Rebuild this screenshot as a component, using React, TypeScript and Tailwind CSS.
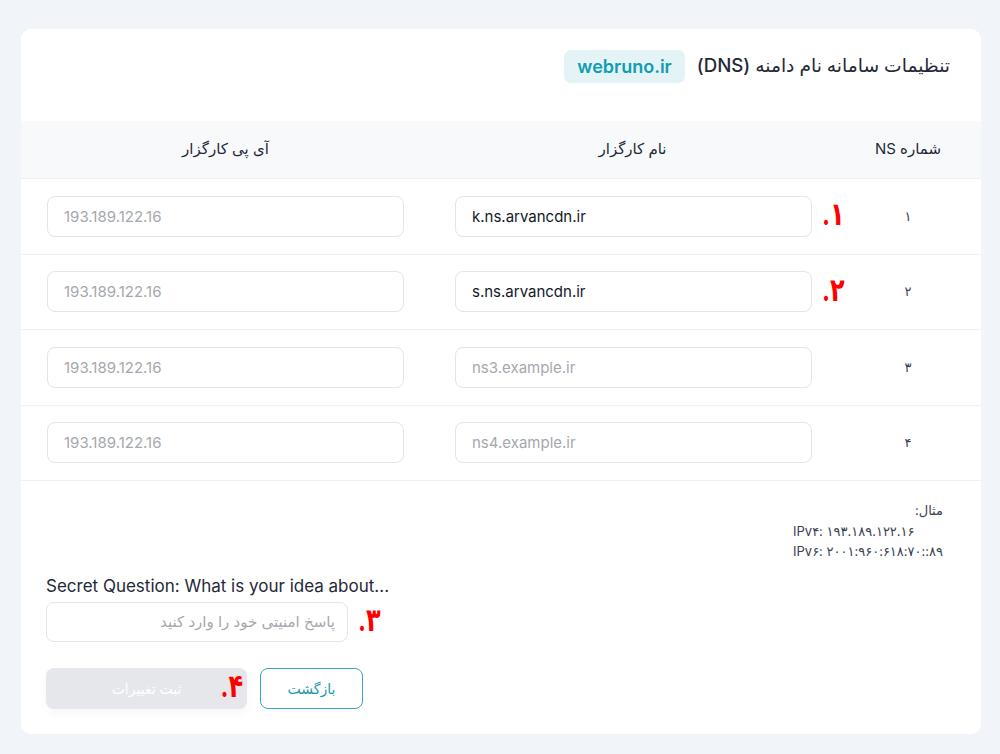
import React from 'react';

const font = { fontFamily: 'Inter, "DejaVu Sans", sans-serif' };

const rows = [
  { num: '۱', ns: 'k.ns.arvancdn.ir', filled: true, mark: '۱.' },
  { num: '۲', ns: 's.ns.arvancdn.ir', filled: true, mark: '۲.' },
  { num: '۳', ns: 'ns3.example.ir', filled: false, mark: '' },
  { num: '۴', ns: 'ns4.example.ir', filled: false, mark: '' },
];

const Marker: React.FC<{ text: string; className?: string }> = ({ text, className }) => (
  <span
    dir="rtl"
    className={`absolute top-1/2 -translate-y-[55%] scale-x-[0.75] text-[32px] font-bold leading-none text-[#ff0000] ${className ?? ''}`}
  >
    {text}
  </span>
);

const App: React.FC = () => {
  return (
    <div className="min-h-[754px] bg-[#f1f4f9] pt-[29px] pb-[20px] pl-[21px] pr-[19px]" style={font}>
      <div dir="rtl" className="w-[960px] rounded-[10px] bg-white pb-[25px]">
        {/* Header */}
        <div className="flex items-center gap-[12px] pr-[31px] pt-[21px] pb-[38px]">
          <h1 className="text-[18.7px] font-medium text-[#1f2937]">تنظیمات سامانه نام دامنه (DNS)</h1>
          <span dir="ltr" className="flex h-[33px] items-center rounded-[7px] bg-[#e4f3f6] px-[13px] text-[18px] font-semibold text-[#0f9db0]">
            webruno.ir
          </span>
        </div>

        {/* Table */}
        <div className="grid grid-cols-[146px_405px_1fr] h-[58px] items-center bg-[#f8f9fb] border-b border-[#eef0f3] text-[15px] text-[#1f2937]">
          <div className="text-center">شماره NS</div>
          <div className="text-center">نام کارگزار</div>
          <div className="text-center">آی پی کارگزار</div>
        </div>

        {rows.map((row) => (
          <div key={row.num} className="grid grid-cols-[146px_405px_1fr] h-[75.5px] items-center border-b border-[#eef0f3]">
            <div className="text-center text-[13px] text-[#374151]">{row.num}</div>
            <div className="pr-[23px] pl-[25px]">
              <div className="relative">
                <input
                  dir="ltr"
                  readOnly
                  value={row.filled ? row.ns : ''}
                  placeholder={row.filled ? '' : row.ns}
                  className="h-[41px] w-full rounded-[8px] border border-[#e3e5e9] px-[16px] text-[15px] text-[#111827] placeholder:text-[#a5a8ae] outline-none"
                />
                {row.mark && <Marker text={row.mark} className="left-full ml-[10px] origin-left" />}
              </div>
            </div>
            <div className="px-[26px]">
              <input
                dir="ltr"
                readOnly
                placeholder="193.189.122.16"
                className="h-[41px] w-full rounded-[8px] border border-[#e3e5e9] px-[16px] text-[15px] placeholder:text-[#a5a8ae] outline-none"
              />
            </div>
          </div>
        ))}

        {/* Example */}
        <div className="pr-[38px] pt-[16px]">
          <div className="inline-flex flex-col text-[13px] leading-[20.5px] text-[#374151]">
            <div dir="auto">مثال:</div>
            <div dir="auto">IPv۴: ۱۹۳.۱۸۹.۱۲۲.۱۶</div>
            <div dir="auto">IPv۶: ۲۰۰۱:۹۶۰:۶۱۸:۷۰::۸۹</div>
          </div>
        </div>

        {/* Secret question + actions */}
        <div dir="ltr" className="flex flex-col items-start pl-[25px] pt-[12px]">
          <label className="text-[17px] leading-[24px] text-[#1f2937]">Secret Question: What is your idea about...</label>
          <div className="relative mt-[4px]">
            <input
              dir="rtl"
              readOnly
              placeholder="پاسخ امنیتی خود را وارد کنید"
              className="h-[40px] w-[302px] rounded-[8px] border border-[#e3e5e9] px-[12px] text-[15px] placeholder:text-[#a5a8ae] outline-none"
            />
            <Marker text="۳." className="left-full ml-[10px] origin-left" />
          </div>

          <div className="mt-[26px] flex gap-[13px]">
            <button className="relative h-[41px] w-[201px] rounded-[8px] bg-[#e5e7eb] text-[14px] text-white shadow-[0_4px_10px_rgba(0,0,0,0.04)]">
              ثبت تغییرات
              <Marker text="۴." className="right-[4px] origin-right" />
            </button>
            <button className="h-[41px] w-[103px] rounded-[8px] border border-[#3aaab8] text-[14px] text-[#1c9aab]">
              بازگشت
            </button>
          </div>
        </div>
      </div>
    </div>
  );
};

export default App;
